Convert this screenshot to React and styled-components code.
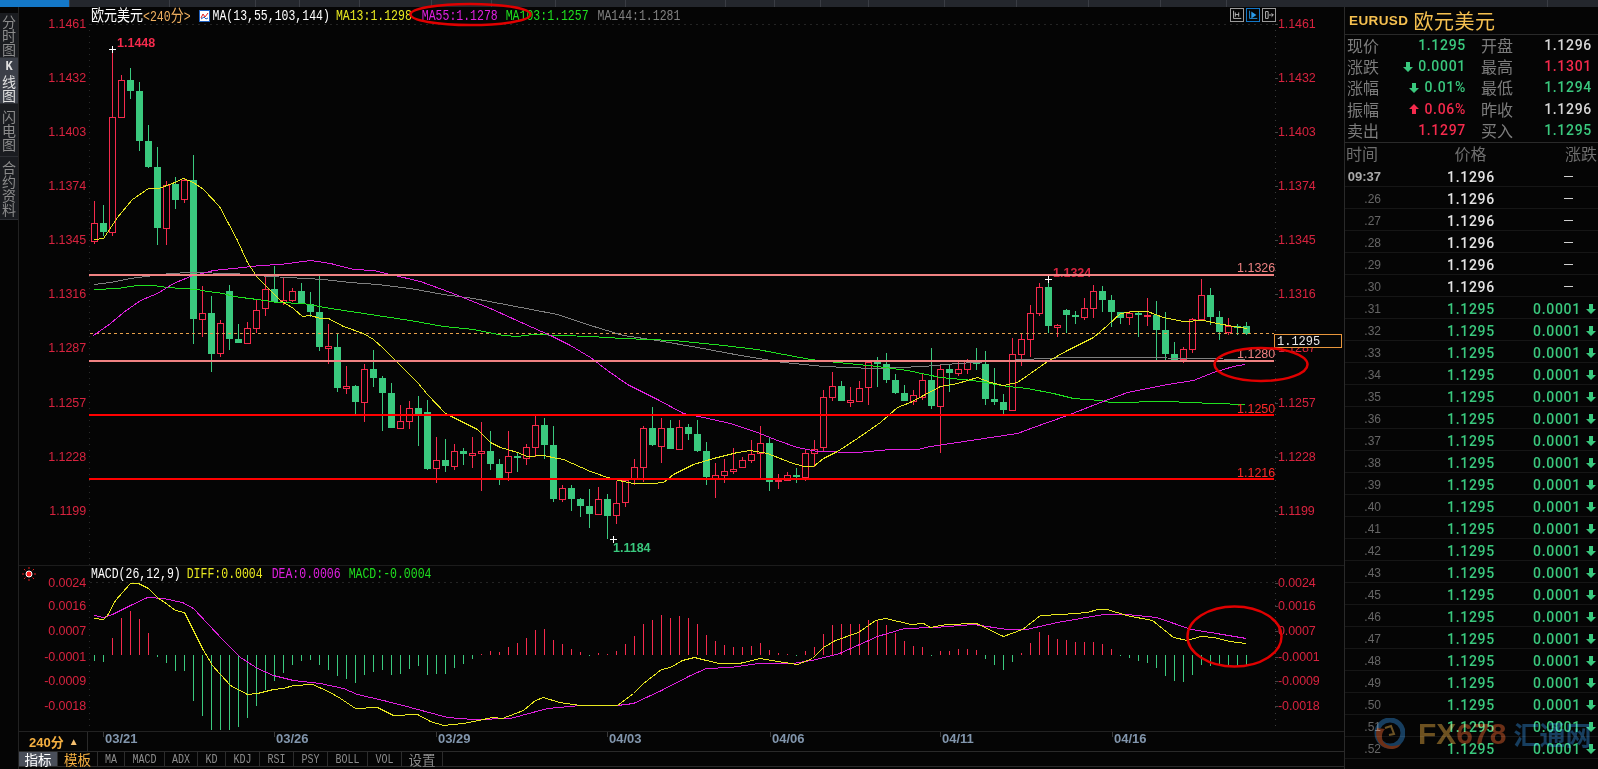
import React from 'react';
import styled, { createGlobalStyle } from 'styled-components';

const RED = '#f52a4c';
const GREEN = '#3ac97e';
const AXIS_RED = '#d8233f';
const PINK = '#f08282';
const BG = '#050505';
const MONO = '"Liberation Mono", "Noto Sans CJK SC", monospace';
const SANS = '"Liberation Sans", "Noto Sans CJK SC", sans-serif';
const NUM = 'Roboto, "Liberation Sans", sans-serif';
const CJK = '"Noto Sans CJK SC", sans-serif';

// [wick top, body top, body bottom, wick bottom, up]
const CANDLES = [
  [201, 223, 241, 244, 1], [205, 223, 232, 236, 0], [49, 117, 232, 236, 1], [75, 80, 117, 117, 1],
  [68, 80, 91, 99, 0], [82, 91, 141, 151, 0], [125, 141, 167, 168, 0], [147, 167, 228, 245, 0],
  [181, 185, 228, 245, 1], [177, 184, 200, 209, 0], [178, 180, 199, 203, 1], [155, 180, 319, 344, 0],
  [286, 313, 319, 337, 1], [296, 313, 354, 372, 0], [320, 323, 353, 357, 1], [285, 291, 339, 350, 0],
  [324, 339, 343, 343, 0], [322, 328, 343, 343, 1], [299, 310, 328, 333, 1], [277, 289, 308, 316, 1],
  [266, 289, 302, 303, 0], [277, 300, 302, 305, 1], [288, 291, 300, 302, 1], [283, 291, 304, 304, 0],
  [292, 304, 312, 317, 0], [276, 312, 347, 351, 0], [324, 346, 348, 364, 1], [334, 347, 388, 392, 0],
  [366, 386, 388, 394, 1], [385, 386, 402, 414, 0], [364, 369, 402, 422, 1], [350, 369, 378, 387, 0],
  [376, 378, 393, 431, 0], [383, 393, 428, 428, 0], [405, 421, 428, 428, 1], [401, 408, 421, 429, 1],
  [396, 408, 414, 446, 0], [400, 412, 469, 470, 0], [437, 460, 468, 483, 1], [439, 460, 466, 472, 0],
  [444, 451, 466, 470, 1], [448, 451, 454, 465, 0], [437, 453, 455, 468, 1], [422, 451, 453, 491, 1],
  [431, 451, 464, 470, 0], [459, 464, 478, 485, 0], [431, 456, 472, 481, 1], [453, 456, 458, 472, 0],
  [444, 447, 458, 465, 1], [416, 425, 447, 457, 1], [418, 425, 445, 459, 0], [426, 445, 499, 502, 0],
  [485, 488, 499, 502, 1], [485, 488, 499, 511, 0], [498, 499, 506, 517, 0], [489, 506, 514, 528, 0],
  [487, 499, 514, 515, 1], [494, 499, 516, 539, 0], [481, 503, 515, 524, 1], [479, 480, 502, 507, 1],
  [459, 467, 479, 485, 1], [426, 428, 467, 482, 1], [407, 428, 445, 446, 0], [418, 428, 446, 463, 1],
  [420, 428, 449, 449, 0], [420, 427, 449, 449, 1], [424, 427, 434, 440, 0], [420, 434, 451, 452, 0],
  [442, 451, 477, 485, 0], [463, 475, 479, 498, 1], [459, 471, 475, 483, 1], [448, 469, 471, 474, 1],
  [457, 460, 467, 468, 1], [440, 454, 460, 463, 1], [426, 443, 453, 479, 1], [437, 443, 482, 491, 0],
  [474, 480, 481, 489, 1], [472, 475, 480, 481, 1], [468, 475, 477, 483, 0], [450, 453, 477, 481, 1],
  [440, 449, 453, 467, 1], [390, 397, 447, 451, 1], [372, 386, 397, 401, 1], [381, 386, 401, 401, 0],
  [387, 400, 402, 407, 1], [381, 388, 401, 401, 1], [362, 362, 387, 405, 1], [357, 362, 364, 387, 0],
  [353, 364, 380, 383, 0], [374, 380, 393, 394, 0], [385, 393, 401, 401, 0], [390, 395, 401, 405, 1],
  [373, 380, 397, 400, 1], [348, 380, 406, 409, 0], [365, 369, 406, 453, 1], [364, 369, 373, 392, 0],
  [362, 369, 373, 376, 1], [359, 361, 369, 374, 1], [348, 362, 364, 370, 0], [351, 364, 399, 405, 0],
  [368, 399, 402, 405, 0], [394, 402, 410, 414, 0], [338, 354, 410, 410, 1], [333, 339, 354, 366, 1],
  [305, 313, 339, 357, 1], [283, 287, 313, 316, 1], [279, 287, 326, 333, 0], [324, 325, 327, 337, 1],
  [309, 310, 315, 333, 0], [311, 315, 317, 324, 0], [298, 308, 317, 320, 1], [285, 291, 308, 318, 1],
  [286, 291, 300, 312, 0], [295, 300, 312, 327, 0], [312, 312, 318, 324, 0], [311, 313, 317, 325, 1],
  [311, 313, 315, 337, 0], [298, 315, 316, 326, 1], [301, 315, 330, 360, 0], [312, 330, 354, 360, 0],
  [342, 354, 360, 360, 0], [347, 349, 359, 363, 1], [318, 319, 349, 353, 1], [279, 295, 319, 319, 1],
  [288, 295, 317, 325, 0], [311, 317, 332, 340, 0], [318, 326, 332, 335, 1], [324, 326, 328, 335, 0],
  [322, 326, 334, 335, 0],
];

const MA13 = '94,239 103,238 117,217 132,199 148,188 158,188 172,183 183,178 193,182 203,189 219,206 228,223 237,240 247,262 257,277 267,287 280,300 293,308 302,316 310,315 320,318 328,318 343,326 363,333 373,339 383,348 397,362 417,382 427,394 445,413 457,419 477,429 490,442 500,447 517,452 527,456 543,455 557,458 563,459 590,471 607,477 623,481 633,483 653,483 663,482 673,474 693,464 713,458 737,452 750,450 767,453 790,462 803,466 813,466 823,458 837,451 857,438 880,422 897,407 910,402 923,395 940,386 957,383 977,377 990,382 1003,385 1017,382 1030,373 1047,361 1067,350 1093,337 1107,325 1120,313 1133,311 1147,311 1163,317 1183,321 1203,320 1217,323 1233,326 1247,328';
const MA55 = '93,335 110,323 123,312 140,300 157,293 173,283 190,276 213,270 233,268 260,265 280,264 310,260 330,263 353,269 373,270 390,274 420,281 450,292 490,308 523,323 550,335 570,345 590,357 607,370 627,384 657,399 683,413 703,417 730,423 757,432 777,440 797,447 817,451 857,452 890,449 917,449 930,446 957,442 990,437 1017,433 1033,427 1067,415 1100,402 1127,392 1167,384 1193,380 1213,372 1233,366 1245,364';
const MA103 = '94,289 117,288 137,285 153,285 167,287 197,289 207,291 223,293 233,296 257,299 277,302 303,303 330,308 357,312 383,316 410,320 443,326 473,329 503,335 517,336 533,334 590,336 623,338 673,340 723,345 757,349 810,359 837,362 877,366 907,370 940,377 973,380 1007,386 1027,388 1053,393 1073,398 1100,400 1110,402 1167,401 1213,403 1245,404';
const MA144 = '94,284 110,282 130,278 170,273 190,272 233,273 270,276 323,279 350,282 377,284 410,288 443,294 473,298 510,305 557,314 590,325 623,335 657,340 697,347 740,355 783,362 823,366 873,368 923,366 957,363 1023,359 1067,357 1133,357 1200,358 1245,359';
const DIFF = '94,618 103,619 107,615 115,600 122,592 130,583 138,583 148,588 157,597 167,604 175,610 184,612 192,628 202,648 212,665 220,674 230,685 247,694 257,693 273,689 283,688 293,685 312,684 328,691 340,698 355,708 377,707 393,715 417,714 430,721 443,725 463,723 478,720 492,717 502,718 523,710 535,700 543,697 559,702 580,705 617,705 633,693 643,683 661,669 670,667 682,660 694,657 706,660 719,663 739,663 760,658 777,661 797,664 812,658 823,647 835,640 858,632 875,620 885,618 911,624 923,623 930,627 946,624 976,623 1003,636 1022,629 1040,615 1061,614 1087,612 1097,609 1107,609 1126,615 1152,620 1173,637 1187,640 1200,636 1214,637 1229,641 1246,643';
const DEA = '94,615 103,617 112,614 130,605 147,597 163,598 182,602 193,608 207,623 223,640 240,657 257,668 273,675 293,680 320,683 343,688 357,694 383,700 410,707 447,717 473,719 510,718 547,708 580,705 617,705 633,703 661,690 690,675 706,668 730,667 758,663 793,663 816,659 839,653 877,636 904,628 934,627 973,624 1007,629 1026,629 1057,622 1103,614 1126,614 1156,617 1191,629 1210,632 1246,638';
const BARS = [661, 662, 638, 618, 611, 619, 633, 657, 663, 671, 671, 701, 716, 730, 730, 730, 727, 718, 706, 690, 681, 673, 665, 661, 660, 665, 670, 676, 679, 683, 675, 672, 670, 675, 674, 669, 666, 675, 674, 674, 668, 664, 659, 654, 651, 652, 647, 643, 638, 630, 629, 640, 644, 649, 652, 656, 653, 654, 651, 644, 636, 624, 620, 615, 618, 616, 618, 624, 635, 641, 645, 647, 647, 646, 643, 650, 653, 654, 656, 651, 647, 634, 625, 624, 624, 624, 620, 620, 625, 633, 641, 646, 647, 656, 651, 651, 649, 649, 650, 659, 665, 670, 662, 653, 643, 632, 635, 639, 640, 642, 642, 642, 644, 649, 656, 658, 661, 663, 668, 676, 681, 682, 675, 665, 666, 666, 666, 666, 666];

const MAIN_TICKS = [
  ['1.1461', 28], ['1.1432', 82], ['1.1403', 136], ['1.1374', 190], ['1.1345', 244],
  ['1.1316', 298], ['1.1287', 352], ['1.1257', 407], ['1.1228', 461], ['1.1199', 515],
];
const MACD_TICKS = [
  ['0.0024', 587], ['0.0016', 610], ['0.0007', 635], ['-0.0001', 661], ['-0.0009', 685], ['-0.0018', 710],
];
const DATES = [['03/21', 171], ['03/26', 162], ['03/29', 171], ['04/03', 163], ['04/06', 170], ['04/11', 172], ['04/16', 231]];
const TOP_TABS = [70, 100, 86, 44, 60, 72, 60, 64, 70, 100, 49, 46, 48, 76, 72, 72, 72, 66, 321];
const SECONDS = ['26', '27', '28', '29', '30', '31', '32', '33', '34', '35', '36', '37', '38', '39', '40', '41', '42', '43', '45', '46', '47', '48', '49', '50', '51', '52'];
const TOOLS = [['MA', 27], ['MACD', 40], ['ADX', 33], ['KD', 28], ['KDJ', 34], ['RSI', 34], ['PSY', 34], ['BOLL', 40], ['VOL', 34]];
const SIDE_TABS = [['分时图', 45], ['K线图', 46, true], ['闪电图', 53], ['合约资料', 63]];
const QUOTES = [
  ['现价', '1.1295', GREEN, null, '开盘', '1.1296', '#d8d8d8'],
  ['涨跌', '0.0001', GREEN, 'down', '最高', '1.1301', RED],
  ['涨幅', '0.01%', GREEN, 'down', '最低', '1.1294', GREEN],
  ['振幅', '0.06%', RED, 'up', '昨收', '1.1296', '#d8d8d8'],
  ['卖出', '1.1297', RED, null, '买入', '1.1295', GREEN],
];

const GlobalStyle = createGlobalStyle`
  html, body { margin: 0; padding: 0; background: ${BG}; overflow: hidden; }
  * { box-sizing: border-box; }
`;

function Arrow({ dir, color }) {
  return (
    <ArrowSvg viewBox="0 0 10 10" $up={dir === 'up'}>
      <path d="M3 0h4v5h3L5 10 0 5h3z" fill={color} />
    </ArrowSvg>
  );
}

function CandleChart() {
  return CANDLES.map(([hi, top, bot, lo, up], i) => {
    const x = 94 + 9 * i;
    const h = Math.max(bot - top, 1);
    if (up) {
      return (
        <g key={i}>
          <rect x={x} y={hi} width="1" height={lo - hi} fill={RED} />
          <rect x={x - 3 + 0.5} y={top + 0.5} width="6" height={h} fill={BG} stroke={RED} />
        </g>
      );
    }
    return (
      <g key={i}>
        <rect x={x} y={hi} width="1" height={lo - hi} fill={GREEN} />
        <rect x={x - 3} y={top} width="7" height={h} fill={GREEN} />
      </g>
    );
  });
}

function AxisLabels({ ticks }) {
  return ticks.map(([label, y]) => (
    <g key={label}>
      <AxisText x="86" y={y} textAnchor="end">{label}</AxisText>
      <AxisText x="1278" y={y}>{label}</AxisText>
      <rect x="1275" y={y - 4} width="3" height="1" fill="#444" />
    </g>
  ));
}

function MainChart() {
  return (
    <ChartSvg viewBox="19 24 1325 541" $h={541}>
      <line x1="90" y1="24.5" x2="1275" y2="24.5" stroke="#242424" strokeDasharray="2 4" />
      <line x1="89.5" y1="24" x2="89.5" y2="565" stroke="#2a2a2a" strokeDasharray="1 5" />
      <line x1="1275.5" y1="24" x2="1275.5" y2="565" stroke="#3a3a3a" strokeDasharray="1 5" />
      <AxisLabels ticks={MAIN_TICKS} />
      <CandleChart />
      <PeakText x="117" y="47" fill={RED}>1.1448</PeakText>
      <PeakText x="1053" y="277" fill={AXIS_RED}>1.1324</PeakText>
      <PeakText x="613" y="552" fill={GREEN}>1.1184</PeakText>
      <path d="M109 49.5h7M112.5 46v7M1045 279.5h7M1048.5 276v7M610 539.5h7M613.5 536v7" stroke="#fff" fill="none" />
      <line x1="90" y1="333.5" x2="1274" y2="333.5" stroke="#e8a04a" strokeDasharray="3 3" />
      <g fill="none" shapeRendering="crispEdges" transform="translate(.5 .5)">
        <polyline points={MA144} stroke="#808080" />
        <polyline points={MA103} stroke="#1fe01f" />
        <polyline points={MA55} stroke="#e020e0" />
        <polyline points={MA13} stroke="#e8e820" />
      </g>
      <rect x="89" y="274" width="1185" height="2" fill={PINK} />
      <rect x="89" y="360" width="1185" height="2" fill={PINK} />
      <rect x="89" y="414" width="1185" height="2" fill="#ff0000" />
      <rect x="89" y="478" width="1185" height="2" fill="#ff0000" />
      <LineText x="1237" y="272" fill={PINK}>1.1326</LineText>
      <LineText x="1237" y="358" fill={PINK}>1.1280</LineText>
      <LineText x="1237" y="413" fill="#ff2a2a">1.1250</LineText>
      <LineText x="1237" y="477" fill="#ff2a2a">1.1216</LineText>
      <rect x="1274.5" y="334.5" width="67" height="13" fill={BG} stroke="#e8963c" />
      <PriceBoxText x="1277" y="345">1.1295</PriceBoxText>
    </ChartSvg>
  );
}

function MacdChart() {
  return (
    <ChartSvg viewBox="19 581 1325 150" $h={150}>
      <line x1="90" y1="582.5" x2="1275" y2="582.5" stroke="#242424" strokeDasharray="2 4" />
      <line x1="89.5" y1="581" x2="89.5" y2="731" stroke="#2a2a2a" strokeDasharray="1 5" />
      <line x1="1275.5" y1="581" x2="1275.5" y2="731" stroke="#3a3a3a" strokeDasharray="1 5" />
      <AxisLabels ticks={MACD_TICKS} />
      {BARS.map((end, i) => (
        <rect
          key={i}
          x={94 + 9 * i}
          y={end < 655 ? end : 655}
          width="1"
          height={Math.abs(end - 655)}
          fill={end < 655 ? RED : GREEN}
        />
      ))}
      <g fill="none" shapeRendering="crispEdges" transform="translate(.5 .5)">
        <polyline points={DEA} stroke="#e020e0" />
        <polyline points={DIFF} stroke="#e8e820" />
      </g>
    </ChartSvg>
  );
}

function Watermark() {
  return (
    <Mark>
      <MarkLogo viewBox="0 0 32 33">
        <circle cx="17" cy="15" r="13" fill="none" stroke="#123a5c" strokeWidth="5" />
        <path d="M4 10c-3 10 2 20 14 21 5 0 8-2 10-5-6 3-15 3-18-3-2-4-1-9 2-12z" fill="#6a2c12" />
        <path d="M12 10l6-2 3 8-5 1" fill="none" stroke="#6a5020" strokeWidth="2" />
      </MarkLogo>
      <MarkGold>FX</MarkGold>
      <MarkRed>678</MarkRed>
      <MarkBlue>汇通网</MarkBlue>
    </Mark>
  );
}

function QuotePanel() {
  return (
    <Panel>
      <PanelTitle>
        <Symbol>EURUSD</Symbol>
        <SymbolName>欧元美元</SymbolName>
      </PanelTitle>
      <QuoteGrid>
        {QUOTES.map(([label, value, color, dir, label2, value2, color2]) => (
          <React.Fragment key={label}>
            <QuoteLabel>{label}</QuoteLabel>
            <QuoteValue $color={color}>
              {dir && <Arrow dir={dir} color={color} />}
              {value}
            </QuoteValue>
            <QuoteLabel $pad>{label2}</QuoteLabel>
            <QuoteValue $color={color2}>{value2}</QuoteValue>
          </React.Fragment>
        ))}
      </QuoteGrid>
      <TradeHead>
        <span>时间</span>
        <span>价格</span>
        <span>涨跌</span>
      </TradeHead>
      <TradeRow>
        <TradeTime $first>09:37</TradeTime>
        <TradePrice $color="#e4e4e4">1.1296</TradePrice>
        <TradeChange><Dash /></TradeChange>
      </TradeRow>
      {SECONDS.map((s, i) => {
        const flat = i < 5;
        return (
          <TradeRow key={s}>
            <TradeTime>.{s}</TradeTime>
            <TradePrice $color={flat ? '#e4e4e4' : GREEN}>{flat ? '1.1296' : '1.1295'}</TradePrice>
            {flat ? (
              <TradeChange><Dash /></TradeChange>
            ) : (
              <TradeChange $value>0.0001<Arrow dir="down" color={GREEN} /></TradeChange>
            )}
          </TradeRow>
        );
      })}
      <Watermark />
    </Panel>
  );
}

export default function App() {
  return (
    <Page>
      <GlobalStyle />
      <TopBar>
        {TOP_TABS.map((w, i) => <TopTab key={i} $w={w} $active={i === 0} />)}
      </TopBar>
      <Body>
        <SideRail>
          {SIDE_TABS.map(([name, h, active]) => (
            <SideTab key={name} $h={h} $active={active}>
              {[...name].map((c) => <SideChar key={c} $latin={c === 'K'}>{c}</SideChar>)}
            </SideTab>
          ))}
        </SideRail>
        <ChartColumn>
          <LegendRow $h={17}>
            <Legend $color="#fff" $gap={0}><Cn>欧元美元</Cn></Legend>
            <Legend $color="#f0b060" $gap={0}>&lt;240<Cn>分</Cn>&gt;</Legend>
            <IndicatorIcon viewBox="0 0 11 12">
              <rect x="0.5" y="0.5" width="10" height="11" fill="#fff" stroke="#2060c0" />
              <path d="M2 8l2-4 2 3 3-4" fill="none" stroke="#e02020" />
              <path d="M2 9l3-2 2 2 2-1" fill="none" stroke="#2060c0" />
            </IndicatorIcon>
            <Legend $color="#fff" $gap={3}>MA(13,55,103,144)</Legend>
            <Legend $color="#e8e820" $gap={6}>MA13:1.1298</Legend>
            <Legend $color="#e020e0" $gap={10}>MA55:1.1278</Legend>
            <Legend $color="#1fe01f" $gap={8}>MA103:1.1257</Legend>
            <Legend $color="#808080" $gap={9}>MA144:1.1281</Legend>
            <ToolButtons>
              <ToolIcon viewBox="0 0 14 14" $color="#9a9a9a">
                <path d="M3 2v9h9M5 4v5M9 4v5M5 6.5h4" fill="none" stroke="#cfcfcf" />
              </ToolIcon>
              <ToolIcon viewBox="0 0 14 14" $color="#1478c8">
                <path d="M3 2v9h9" fill="none" stroke="#2a9ae8" /><path d="M5 3l6 4-6 4z" fill="#2a9ae8" />
              </ToolIcon>
              <ToolIcon viewBox="0 0 14 14" $color="#9a9a9a">
                <path d="M3 3h3v8H3zM7 7h5M10 5l2 2-2 2" fill="none" stroke="#cfcfcf" />
              </ToolIcon>
            </ToolButtons>
          </LegendRow>
          <MainChart />
          <LegendRow $h={16} $border>
            <SignalIcon viewBox="0 0 16 16">
              <circle cx="8" cy="8" r="3" fill="#ff2020" stroke="#fff" />
              <path d="M8 1v2M8 13v2M1 8h2M13 8h2M3 3l1.4 1.4M11.6 11.6L13 13M13 3l-1.4 1.4M4.4 11.6L3 13" stroke="#e02020" />
            </SignalIcon>
            <Legend $color="#fff" $gap={0}>MACD(26,12,9)</Legend>
            <Legend $color="#e8e820" $gap={6}>DIFF:0.0004</Legend>
            <Legend $color="#e020e0" $gap={9}>DEA:0.0006</Legend>
            <Legend $color="#1fe01f" $gap={8}>MACD:-0.0004</Legend>
          </LegendRow>
          <MacdChart />
          <DateRow>
            <PeriodBox>240分 <PeriodArrow>▲</PeriodArrow></PeriodBox>
            {DATES.map(([d, w]) => <DateCell key={d} $w={w}>{d}</DateCell>)}
          </DateRow>
          <ToolRow>
            <ToolTab $w={39} $active>指标</ToolTab>
            <ToolTab $w={40} $orange>模板</ToolTab>
            {TOOLS.map(([t, w]) => <ToolTab key={t} $w={w}><ToolLabel>{t}</ToolLabel></ToolTab>)}
            <ToolTab $w={41}>设置</ToolTab>
          </ToolRow>
        </ChartColumn>
        <QuotePanel />
      </Body>
      <Annotations viewBox="0 0 1598 769">
        <ellipse cx="470.5" cy="14.5" rx="60" ry="10.5" />
        <ellipse cx="1261" cy="364.5" rx="46.5" ry="16.5" />
        <ellipse cx="1234.5" cy="636.5" rx="47" ry="30" />
      </Annotations>
    </Page>
  );
}

const Page = styled.div`
  position: relative;
  width: 1598px;
  height: 769px;
  display: flex;
  flex-direction: column;
  background: ${BG};
  overflow: hidden;
`;

const TopBar = styled.div`
  display: flex;
  height: 7px;
  background: #24272d;
`;

const TopTab = styled.div`
  width: ${(p) => p.$w}px;
  background: ${(p) => (p.$active ? '#1478c8' : 'transparent')};
  border-right: 1px solid #3a3d44;
`;

const Body = styled.div`
  flex: 1;
  display: flex;
  min-height: 0;
`;

const SideRail = styled.div`
  width: 19px;
  padding-top: 6px;
  border-right: 1px solid #222;
  display: flex;
  flex-direction: column;
`;

const SideTab = styled.div`
  height: ${(p) => p.$h}px;
  width: 18px;
  flex: none;
  display: flex;
  flex-direction: column;
  align-items: center;
  justify-content: center;
  color: ${(p) => (p.$active ? '#e0e0e0' : '#8c8c8c')};
  background: ${(p) => (p.$active ? '#3c4049' : '#1a1c20')};
  border-bottom: 1px solid #2c2e33;
`;

const SideChar = styled.span`
  font: ${(p) => (p.$latin ? `bold 12px/14px ${MONO}` : `14px/14px ${CJK}`)};
`;

const ChartColumn = styled.div`
  width: 1325px;
  display: flex;
  flex-direction: column;
`;

const LegendRow = styled.div`
  height: ${(p) => p.$h}px;
  flex: none;
  display: flex;
  align-items: center;
  padding-left: 72px;
  border-top: ${(p) => (p.$border ? '1px solid #1c1c1c' : 'none')};
  position: relative;
`;

const Legend = styled.span`
  color: ${(p) => p.$color};
  margin-left: ${(p) => p.$gap}px;
  font: 11.5px/16px ${MONO};
  white-space: pre;
  display: inline-block;
  transform: scaleY(1.2);
`;

const Cn = styled.span`
  font: 13px/16px ${CJK};
`;

const IndicatorIcon = styled.svg`
  width: 11px;
  height: 12px;
  margin-left: 8px;
  flex: none;
`;

const ToolButtons = styled.div`
  position: absolute;
  left: 1211px;
  top: 1px;
  display: flex;
  gap: 2px;
`;

const ToolIcon = styled.svg`
  width: 14px;
  height: 14px;
  border: 1px solid ${(p) => p.$color};
`;

const SignalIcon = styled.svg`
  position: absolute;
  left: 2px;
  top: 0;
  width: 16px;
  height: 16px;
`;

const ChartSvg = styled.svg`
  display: block;
  flex: none;
  width: 1325px;
  height: ${(p) => p.$h}px;
  overflow: visible;
`;

const AxisText = styled.text`
  fill: ${AXIS_RED};
  font: 12.5px ${SANS};
  letter-spacing: -0.1px;
`;

const PeakText = styled.text`
  font: bold 12.5px ${SANS};
`;

const LineText = styled.text`
  font: 12.5px ${SANS};
`;

const PriceBoxText = styled.text`
  fill: #e8e8e8;
  font: 12px ${MONO};
`;

const DateRow = styled.div`
  height: 20px;
  flex: none;
  display: flex;
  border-top: 1px solid #222;
`;

const PeriodBox = styled.div`
  width: 69px;
  margin-right: 15px;
  padding-left: 10px;
  display: flex;
  align-items: center;
  gap: 5px;
  color: #f5b041;
  font: bold 13px ${SANS};
  border-right: 1px solid #2a2a2a;
`;

const PeriodArrow = styled.span`
  font-size: 10px;
  color: #f5c070;
`;

const DateCell = styled.div`
  width: ${(p) => p.$w}px;
  height: 19px;
  padding-left: 2px;
  color: #8296ad;
  font: bold 13px/14px ${SANS};
  background: linear-gradient(#3a3a3a, #3a3a3a) left top / 1px 5px no-repeat;
`;

const ToolRow = styled.div`
  height: 16px;
  flex: none;
  display: flex;
  border-top: 1px solid #2a2a2a;
  border-bottom: 1px solid #2a2a2a;
`;

const ToolTab = styled.div`
  width: ${(p) => p.$w}px;
  display: flex;
  align-items: center;
  justify-content: center;
  border-right: 1px solid #2c2c2c;
  background: ${(p) => (p.$active ? '#4a4f5a' : 'transparent')};
  color: ${(p) => (p.$active ? '#fff' : p.$orange ? '#f5b041' : '#8c8c8c')};
  font: 13.5px ${CJK};
`;

const ToolLabel = styled.span`
  display: inline-block;
  font: 10px ${MONO};
  transform: scaleY(1.35);
`;

const Panel = styled.div`
  position: relative;
  width: 254px;
  border-left: 1px solid #2a2a2a;
  color: #8a8a8a;
`;

const PanelTitle = styled.div`
  height: 28px;
  display: flex;
  align-items: center;
  padding-left: 4px;
  gap: 5px;
  border-bottom: 1px solid #2a2a2a;
  color: #f5c050;
`;

const Symbol = styled.span`
  font: bold 13.5px ${SANS};
  letter-spacing: 0.4px;
`;

const SymbolName = styled.span`
  font: 20px/26px ${CJK};
  letter-spacing: 0.5px;
`;

const QuoteGrid = styled.div`
  display: grid;
  grid-template-columns: 40px 79px 55px 71px;
  grid-auto-rows: 21.2px;
  padding-left: 2px;
  align-items: center;
  height: 108px;
  border-bottom: 1px solid #2a2a2a;
`;

const QuoteLabel = styled.span`
  font: 16px/21px ${CJK};
  color: #7c7c7c;
  padding-left: ${(p) => (p.$pad ? '15px' : 0)};
  white-space: nowrap;
`;

const QuoteValue = styled.span`
  display: flex;
  justify-content: flex-end;
  align-items: center;
  gap: 5px;
  color: ${(p) => p.$color};
  font: 500 14px/21px ${NUM};
  letter-spacing: 0.7px;
`;

const ArrowSvg = styled.svg`
  width: 10px;
  height: 10px;
  flex: none;
  transform: ${(p) => (p.$up ? 'rotate(180deg)' : 'none')};
`;

const TradeHead = styled.div`
  height: 22px;
  display: flex;
  justify-content: space-between;
  padding: 0 1px;
  color: #6e6e6e;
  font: 16px/20px ${CJK};

  span:nth-child(2) { margin-left: -2px; }
`;

const TradeRow = styled.div`
  height: 22px;
  display: flex;
  align-items: center;
  padding-top: 2px;
  border-bottom: 1px solid #161616;
`;

const TradeTime = styled.span`
  width: 36px;
  text-align: right;
  color: ${(p) => (p.$first ? '#aaa' : '#666')};
  font: ${(p) => (p.$first ? 'bold 13px' : '12px')} ${SANS};
`;

const TradePrice = styled.span`
  width: 152px;
  padding-left: 66px;
  color: ${(p) => p.$color};
  font: 500 14px ${NUM};
  letter-spacing: 0.7px;
`;

const TradeChange = styled.span`
  display: flex;
  align-items: center;
  gap: 5px;
  padding-left: ${(p) => (p.$value ? 0 : '31px')};
  color: ${GREEN};
  font: 500 14px ${NUM};
  letter-spacing: 0.7px;
`;

const Dash = styled.span`
  width: 9px;
  height: 1px;
  background: #cfcfcf;
`;

const Mark = styled.div`
  position: absolute;
  left: 28px;
  top: 710px;
  width: 226px;
  display: flex;
  align-items: center;
  white-space: nowrap;
  pointer-events: none;
  mix-blend-mode: screen;
`;

const MarkLogo = styled.svg`
  width: 32px;
  height: 33px;
  flex: none;
`;

const MarkGold = styled.span`
  margin-left: 13px;
  color: #6a4e1c;
  font: bold 30px/34px ${SANS};
`;

const MarkRed = styled.span`
  color: #6a2c12;
  font: bold 30px/34px ${SANS};
`;

const MarkBlue = styled.span`
  margin-left: 7px;
  color: #123a5c;
  font: bold 26px/34px ${CJK};
`;

const Annotations = styled.svg`
  position: absolute;
  inset: 0;
  width: 1598px;
  height: 769px;
  pointer-events: none;

  ellipse {
    fill: none;
    stroke: #e00000;
    stroke-width: 2.5;
  }
`;
